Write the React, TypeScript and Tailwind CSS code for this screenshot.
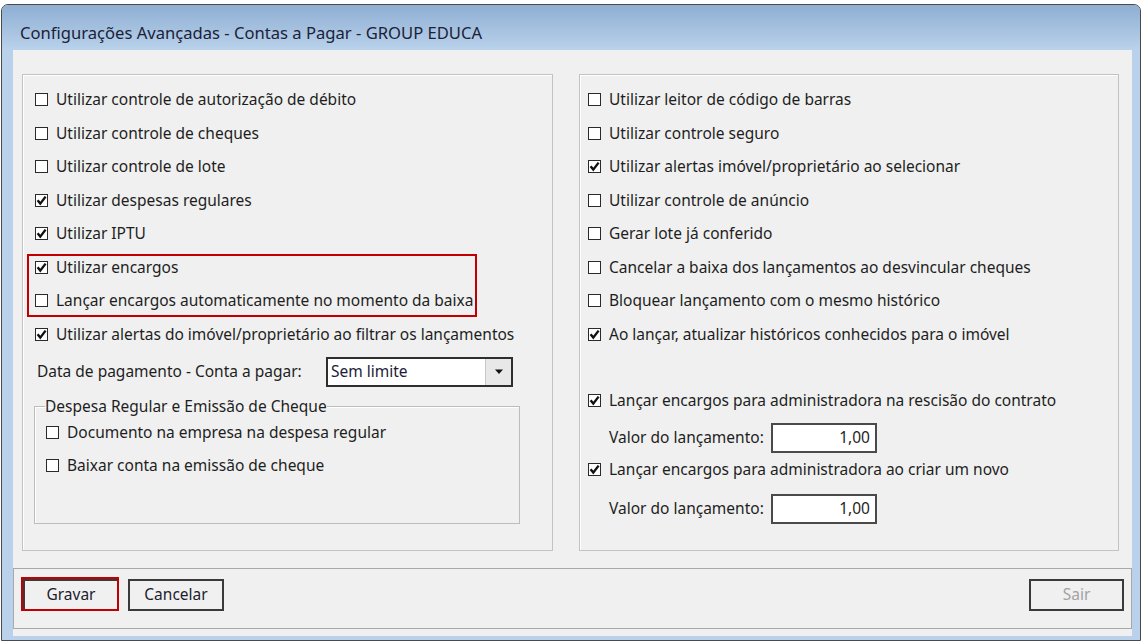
import React from "react";

const F = { fontFamily: '"Noto Sans", "Open Sans", sans-serif' };

function Check({ checked }: { checked?: boolean }) {
  return (
    <span className="w-[13px] h-[13px] border border-[#2a2a2a] bg-white flex items-center justify-center shrink-0">
      {checked && (
        <svg width="11" height="11" viewBox="0 0 11 11">
          <path d="M1.6 5.2 L4.3 8.6 L9.6 1.6" stroke="#111" strokeWidth="2.4" fill="none" />
        </svg>
      )}
    </span>
  );
}

function Row({ label, checked, h = "h-[33.5px]" }: { label: string; checked?: boolean; h?: string }) {
  return (
    <div className={`${h} flex items-center gap-[8px]`}>
      <Check checked={checked} />
      <span className="whitespace-nowrap">{label}</span>
    </div>
  );
}

function ValueRow({ mt }: { mt: string }) {
  return (
    <div className={`${mt} flex items-center h-[30px]`}>
      <span className="w-[183px] shrink-0 pl-[21px] whitespace-nowrap">Valor do lançamento:</span>
      <div className="w-[106px] shrink-0 h-[30px] border-2 border-[#4a4a4a] bg-white flex items-center justify-end pr-[5px]">
        1,00
      </div>
    </div>
  );
}

function Btn({ label, disabled, w }: { label: string; disabled?: boolean; w: string }) {
  return (
    <div
      className={`${w} h-[32px] border-2 border-[#3a3a3a] bg-[#f0f0f0] flex items-center justify-center text-[15.5px] ${
        disabled ? "text-[#a3a3a3]" : "text-[#1c1c2e]"
      }`}
    >
      {label}
    </div>
  );
}

export default function App() {
  return (
    <div className="w-[1144px] h-[643px] bg-white pt-[4px] pl-[1px] text-[15.5px] text-[#1e1e1e]" style={F}>
      <div className="w-[1140px] h-[637px] border border-[#4a4a4a] rounded-t-[7px] bg-[#b9d1ea] flex flex-col overflow-hidden">
        <div className="h-[45px] shrink-0 bg-gradient-to-b from-[#8eaed3] to-[#bad2eb] flex items-center pl-[18px] pt-[12px]">
          <span className="text-[16.6px] text-[#1a2238] whitespace-nowrap">
            Configurações Avançadas - Contas a Pagar - GROUP EDUCA
          </span>
        </div>
        <div className="flex-1 flex pl-[11px] pr-[8px]">
          <div className="flex-1 bg-[#f0f0f0] flex flex-col pt-[24px] pb-[7px]">
            <div className="flex pl-[9px] pr-[12px] gap-[26px] h-[477px]">
              {/* Left group */}
              <div className="w-[531px] border border-[#c3c3c3] shadow-[inset_1px_1px_0_#ffffff] pl-[12px] pt-[8px] flex flex-col">
                <Row label="Utilizar controle de autorização de débito" />
                <Row label="Utilizar controle de cheques" />
                <Row label="Utilizar controle de lote" />
                <Row label="Utilizar despesas regulares" checked />
                <Row label="Utilizar IPTU" checked />
                <div className="relative">
                  <Row label="Utilizar encargos" checked />
                  <Row label="Lançar encargos automaticamente no momento da baixa" />
                  <div className="absolute left-[-8px] top-[3.5px] w-[450px] h-[63px] border-2 border-[#c00000]" />
                </div>
                <Row label="Utilizar alertas do imóvel/proprietário ao filtrar os lançamentos" checked />
                <div className="mt-[6px] h-[30px] flex items-center">
                  <span className="w-[291px] shrink-0 pl-[2px] whitespace-nowrap">Data de pagamento - Conta a pagar:</span>
                  <div className="w-[187px] shrink-0 h-[30px] border-2 border-[#2e2e2e] bg-white flex items-center">
                    <span className="flex-1 pl-[3px] text-[#1c1c3a]">Sem limite</span>
                    <div className="w-[26px] h-full bg-[#e8e8e8] border-l border-[#c8c8c8] flex items-center justify-center">
                      <svg width="10" height="6" viewBox="0 0 10 6">
                        <path d="M1 0.5 L9 0.5 L5 5 Z" fill="#111" />
                      </svg>
                    </div>
                  </div>
                </div>
                <fieldset className="mt-[9px] -ml-px w-[486px] h-[128px] border border-[#bcbcbc] shadow-[inset_1px_1px_0_#ffffff] pl-[11px]">
                  <legend className="ml-[-1px] h-[20px] leading-[20px] whitespace-nowrap">Despesa Regular e Emissão de Cheque</legend>
                  <Row label="Documento na empresa na despesa regular" h="h-[33px]" />
                  <Row label="Baixar conta na emissão de cheque" h="h-[33px]" />
                </fieldset>
              </div>
              {/* Right group */}
              <div className="w-[540px] border border-[#c3c3c3] shadow-[inset_1px_1px_0_#ffffff] pl-[8px] pt-[8px] flex flex-col">
                <Row label="Utilizar leitor de código de barras" />
                <Row label="Utilizar controle seguro" />
                <Row label="Utilizar alertas imóvel/proprietário ao selecionar" checked />
                <Row label="Utilizar controle de anúncio" />
                <Row label="Gerar lote já conferido" />
                <Row label="Cancelar a baixa dos lançamentos ao desvincular cheques" />
                <Row label="Bloquear lançamento com o mesmo histórico" />
                <Row label="Ao lançar, atualizar históricos conhecidos para o imóvel" checked />
                <div className="mt-[33px]">
                  <Row label="Lançar encargos para administradora na rescisão do contrato" checked />
                </div>
                <ValueRow mt="mt-[5px]" />
                <Row label="Lançar encargos para administradora ao criar um novo" checked />
                <ValueRow mt="mt-[8px]" />
              </div>
            </div>
            <div className="mt-[17px] h-[61px] border border-[#a8a8a8] flex items-start pt-[10px] pl-[9px] pr-[7px]">
              <div className="relative">
                <Btn label="Gravar" w="w-[96px]" />
                <div className="absolute left-[-2px] top-[-2px] w-[98px] h-[34px] border-2 border-[#c00000]" />
              </div>
              <div className="ml-[9px]">
                <Btn label="Cancelar" w="w-[96px]" />
              </div>
              <div className="ml-auto">
                <Btn label="Sair" disabled w="w-[95px]" />
              </div>
            </div>
          </div>
        </div>
        <div className="h-[4px] shrink-0" />
      </div>
    </div>
  );
}
